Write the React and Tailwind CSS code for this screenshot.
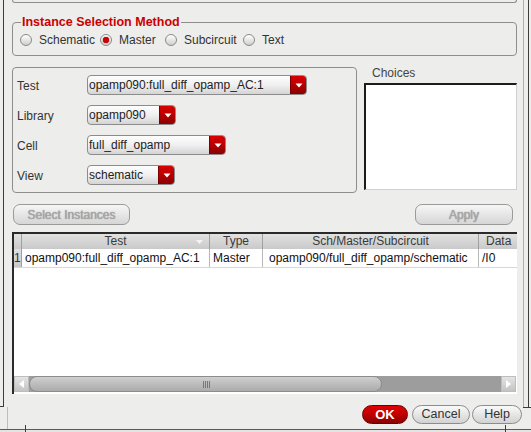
import React from "react";

const Radio = ({ checked, label, w }) => (
  <div className={`flex items-center ${w}`}>
    <div className="relative w-[12px] h-[12px] rounded-full border border-[#8a8a8a] bg-gradient-to-b from-[#ffffff] to-[#cfcfcf] flex items-center justify-center">
      {checked && <div className="w-[6px] h-[6px] rounded-full bg-[#d00000] shadow-[0_0_1px_#700]" />}
    </div>
    <span className="ml-[7px] text-[12px] text-[#333] leading-[14px]">{label}</span>
  </div>
);

const Tri = () => (
  <svg width="8" height="5" viewBox="0 0 8 5">
    <path d="M0.5 0.5 L7.5 0.5 L4 4.5 Z" fill="#ffffff" />
  </svg>
);

const Combo = ({ w, text }) => (
  <div className={`flex h-[20px] ${w} rounded-[4px] border border-[#8c8c8c] overflow-hidden bg-gradient-to-b from-[#fdfdfd] via-[#f0f0f0] to-[#d4d4d4]`}>
    <div className="flex-1 flex items-center pl-[1px] text-[12px] text-[#222] leading-[14px] whitespace-nowrap overflow-hidden">{text}</div>
    <div className="w-[16px] flex items-center justify-center bg-gradient-to-b from-[#d80000] via-[#b80000] to-[#8a0000] border-l border-[#7a0000]">
      <Tri />
    </div>
  </div>
);

const Row = ({ label, children }) => (
  <div className="flex items-center h-[20px]">
    <div className="w-[70px] text-[12px] text-[#333] leading-[14px] pt-[2px]">{label}</div>
    {children}
  </div>
);

export default function App() {
  return (
    <div className="relative w-[531px] h-[432px] overflow-hidden bg-[#ededeb] font-['Liberation_Sans',Arial,sans-serif] text-[#222]">
      {/* window frame lines */}
      <div className="absolute left-[3px] top-0 h-[407px] w-px bg-[#3c3c3c]" />
      <div className="absolute left-0 top-[406px] h-px w-[4px] bg-[#3c3c3c]" />
      <div className="absolute left-[7px] top-[407px] h-[22px] w-px bg-[#bdbdbd]" />
      <div className="absolute left-[523px] top-0 h-[407px] w-px bg-[#b0b0b0]" />
      <div className="absolute left-[528px] top-0 h-[407px] w-px bg-[#3c3c3c]" />
      <div className="absolute left-[523px] top-[407px] h-px w-[8px] bg-[#3c3c3c]" />
      <div className="absolute left-0 top-[429px] h-px w-[531px] bg-[#5a5a5a]" />
      <div className="absolute left-0 top-[430px] h-[2px] w-[531px] bg-[#e4e4e4]" />
      <div className="absolute left-[25px] top-[425px] h-[7px] w-px bg-[#3c3c3c]" />
      <div className="absolute left-[505px] top-[425px] h-[7px] w-px bg-[#3c3c3c]" />

      <div className="flex flex-col pl-[12px] w-[517px]">
        <div className="h-[3px] border border-t-0 border-[#8e8e8e] rounded-b-[3px]" />

        <fieldset className="mt-[12px] border border-[#8e8e8e] rounded-[4px] px-[8px] pb-[8px] m-0">
          <legend className="px-[1px] ml-[0px] text-[12.5px] font-bold text-[#cc0000] leading-[15px]">Instance Selection Method</legend>
          <div className="flex items-center h-[14px] mt-[3px] -ml-[1px]">
            <Radio label="Schematic" w="w-[80px]" />
            <Radio label="Master" checked w="w-[65px]" />
            <Radio label="Subcircuit" w="w-[78px]" />
            <Radio label="Text" w="w-[60px]" />
          </div>
        </fieldset>

        <div className="flex mt-[11px]">
          <div className="w-[345px] h-[126px] border border-[#8e8e8e] rounded-[4px] pl-[4px] pt-[7px] flex flex-col gap-[10px]">
            <Row label="Test"><Combo w="w-[220px]" text="opamp090:full_diff_opamp_AC:1" /></Row>
            <Row label="Library"><Combo w="w-[89px]" text="opamp090" /></Row>
            <Row label="Cell"><Combo w="w-[139px]" text="full_diff_opamp" /></Row>
            <Row label="View"><Combo w="w-[88px]" text="schematic" /></Row>
          </div>
          <div className="ml-[7px] w-[153px] flex flex-col">
            <div className="pl-[8px] text-[12px] leading-[12px] text-[#444]">Choices</div>
            <div className="mt-[4px] h-[107px] bg-white border-t-2 border-l-2 border-[#1c1c1c] border-r border-b border-r-[#d0d0d0] border-b-[#d0d0d0]" />
          </div>
        </div>

        <div className="flex mt-[11px] h-[21px] justify-between">
          <div className="ml-[1px] w-[117px] h-[21px] rounded-[7px] border border-[#9a9a9a] bg-gradient-to-b from-[#f6f6f6] to-[#d6d6d6] flex items-center justify-center text-[12px] text-[#a9a9a9] [text-shadow:0_0_1px_#777]">Select Instances</div>
          <div className="mr-[4px] w-[98px] h-[21px] rounded-[7px] border border-[#9a9a9a] bg-gradient-to-b from-[#f6f6f6] to-[#d6d6d6] flex items-center justify-center text-[12px] text-[#a9a9a9] [text-shadow:0_0_1px_#777]">Apply</div>
        </div>

        <div className="mt-[7px] h-[162px] border-t-2 border-l-2 border-[#2a2a2a] bg-white flex flex-col overflow-hidden">
          <div className="flex h-[15px] bg-gradient-to-b from-[#e2e2e2] to-[#c9c9c9] text-[12px] leading-[15px] text-[#3a3a3a] whitespace-nowrap">
            <div className="w-[8px] border-r border-[#a0a0a0]" />
            <div className="relative w-[188px] border-r border-[#a0a0a0] text-center">
              Test
              <svg className="absolute right-[6px] top-[6px]" width="7" height="4" viewBox="0 0 7 4"><path d="M0 0 L7 0 L3.5 4 Z" fill="#f4f4f4" /></svg>
            </div>
            <div className="w-[53px] border-r border-[#a0a0a0] text-center">Type</div>
            <div className="w-[216px] border-r border-[#a0a0a0] text-center">Sch/Master/Subcircuit</div>
            <div className="flex-1 pl-[7px]">Data</div>
          </div>
          <div className="flex h-[19px] text-[12px] leading-[18px] text-[#111] whitespace-nowrap border-b border-[#d8d8d8]">
            <div className="w-[8px] bg-gradient-to-b from-[#e0e0e0] to-[#c8c8c8] border-r border-[#a0a0a0] text-[#333]">1</div>
            <div className="w-[188px] pl-[3px] border-r border-[#b8b8b8]">opamp090:full_diff_opamp_AC:1</div>
            <div className="w-[53px] pl-[3px] border-r border-[#b8b8b8]">Master</div>
            <div className="w-[216px] pl-[6px] border-r border-[#b8b8b8]">opamp090/full_diff_opamp/schematic</div>
            <div className="flex-1 pl-[3px]">/I0</div>
          </div>
          <div className="flex-1" />
          <div className="flex h-[16px] pr-[1px]">
            <div className="w-[15px] bg-gradient-to-b from-[#e4e4e4] to-[#c4c4c4] border border-[#bdbdbd] flex items-center justify-center">
              <svg width="5" height="8" viewBox="0 0 5 8"><path d="M5 0 L5 8 L0 4 Z" fill="#ffffff" /></svg>
            </div>
            <div className="flex-1 flex bg-[#9d9d9d]">
              <div className="w-[353px] rounded-[8px] border border-[#8c8c8c] bg-gradient-to-b from-[#cfcfcf] to-[#ababab] flex items-center justify-center">
                <div className="flex gap-[1px] ml-[2px]">
                  <div className="w-px h-[7px] bg-[#777]" />
                  <div className="w-px h-[7px] bg-[#777]" />
                  <div className="w-px h-[7px] bg-[#777]" />
                  <div className="w-px h-[7px] bg-[#777]" />
                </div>
              </div>
            </div>
            <div className="w-[15px] bg-gradient-to-b from-[#e4e4e4] to-[#c4c4c4] border border-[#bdbdbd] flex items-center justify-center">
              <svg width="5" height="8" viewBox="0 0 5 8"><path d="M0 0 L0 8 L5 4 Z" fill="#ffffff" /></svg>
            </div>
          </div>
          <div className="h-[2px] bg-white" />
        </div>

        <div className="flex justify-end w-[510px] mt-[11px] h-[19px] gap-[4px]">
          <div className="w-[46px] h-[19px] rounded-[10px] border border-[#6a0000] bg-gradient-to-b from-[#e00000] via-[#c00000] to-[#8a0000] flex items-center justify-center text-white font-bold text-[13px] leading-[15px]">OK</div>
          <div className="w-[58px] h-[19px] rounded-[10px] border border-[#8c8c8c] bg-gradient-to-b from-[#fafafa] to-[#d2d2d2] flex items-center justify-center text-[#333] text-[12.5px] leading-[15px]">Cancel</div>
          <div className="-ml-[2px] w-[50px] h-[19px] rounded-[10px] border border-[#8c8c8c] bg-gradient-to-b from-[#fafafa] to-[#d2d2d2] flex items-center justify-center text-[#333] text-[12.5px] leading-[15px]">Help</div>
        </div>
      </div>
    </div>
  );
}
